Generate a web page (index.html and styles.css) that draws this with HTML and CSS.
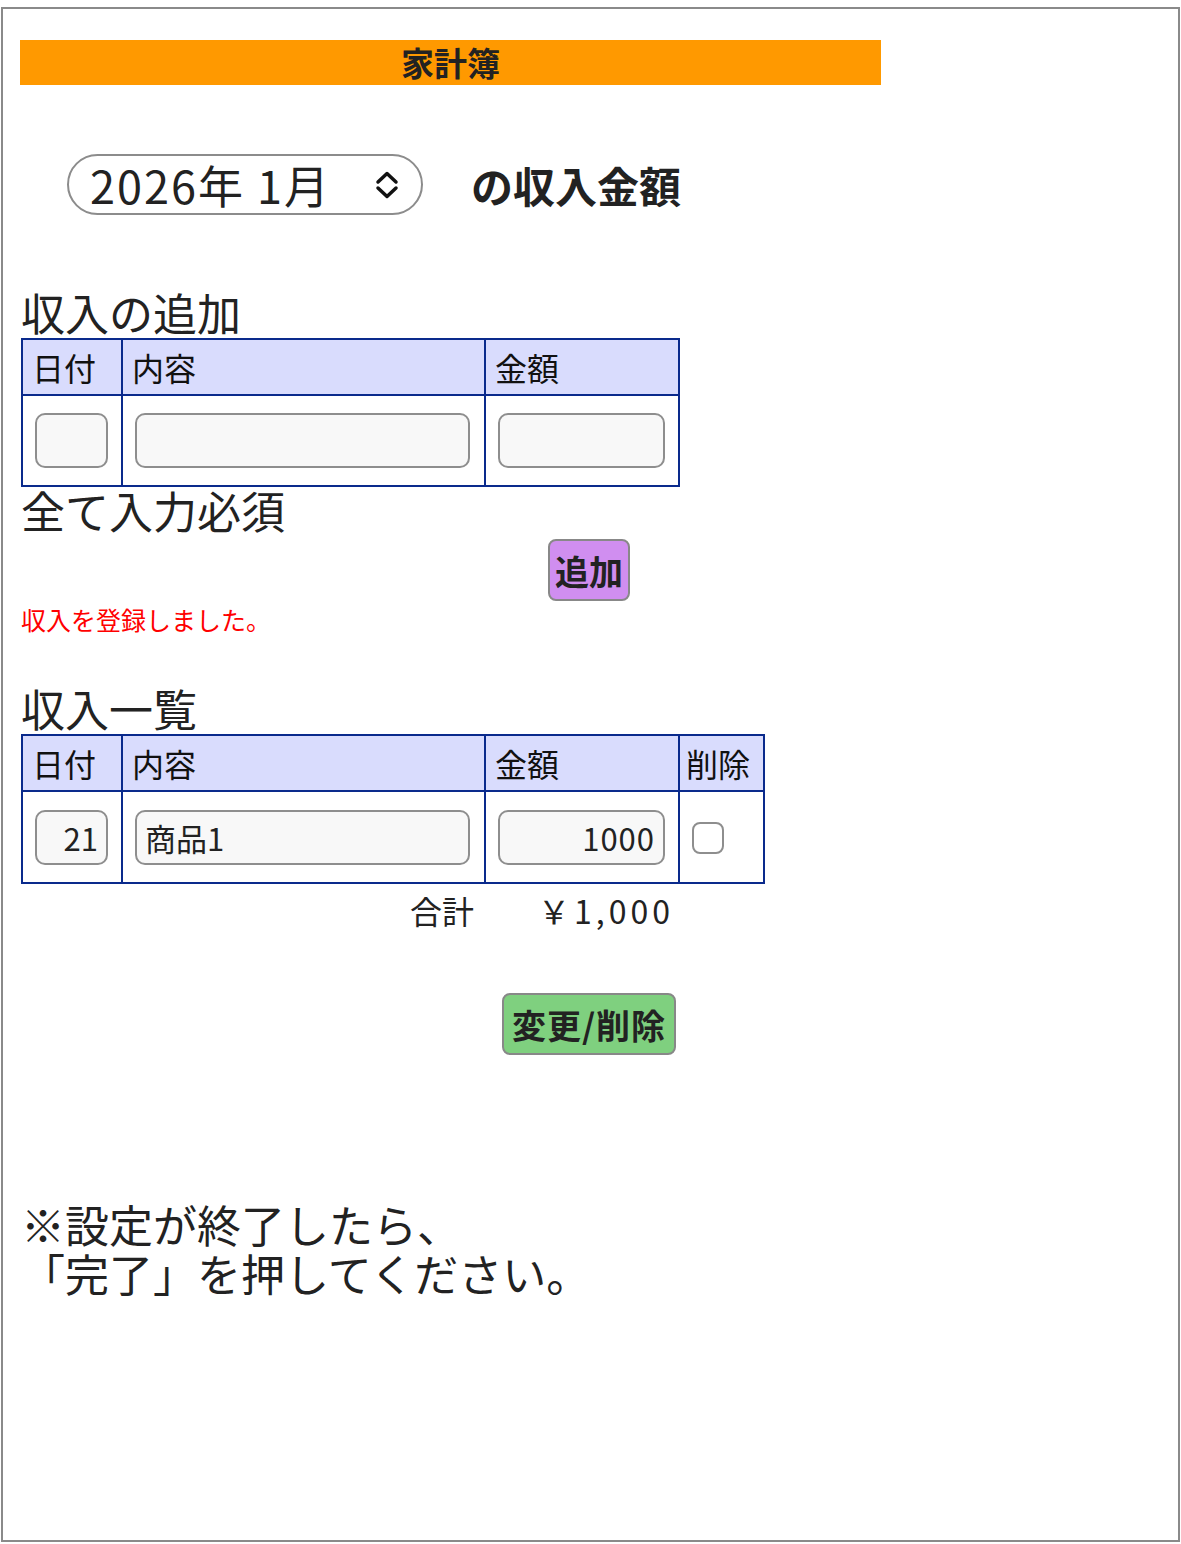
FILE: index.html
```html
<!DOCTYPE html>
<html lang="ja">
<head>
    <meta charset="UTF-8">
    <meta name="viewport" content="width=device-width, initial-scale=1.0">
    <title>家計簿 - 収入</title>
    <link rel="stylesheet" href="styles.css">
</head>
<body>
    <div class="page">
        <h1 class="title-bar">家計簿</h1>

        <div class="month-row">
            <label class="month-picker">
                <select name="month">
                    <option>2026年 1月</option>
                </select>
                <svg class="chevron" width="28" height="30" viewBox="0 0 28 30" aria-hidden="true">
                    <polyline points="5,12 14,3.5 23,12" />
                    <polyline points="5,18 14,26.5 23,18" />
                </svg>
            </label>
            <span class="month-label">の収入金額</span>
        </div>

        <!-- 収入の追加 -->
        <h2 class="section-title">収入の追加</h2>
        <form method="POST" id="incomeAddForm">
            <table class="income-table">
                <thead>
                    <tr>
                        <th class="col-date">日付</th>
                        <th class="col-item">内容</th>
                        <th class="col-amount">金額</th>
                    </tr>
                </thead>
                <tbody>
                    <tr>
                        <td><input type="text" class="input-date" name="day"></td>
                        <td><input type="text" class="input-item" name="item"></td>
                        <td><input type="text" class="input-amount" name="amount"></td>
                    </tr>
                </tbody>
            </table>
            <p class="required-note">全て入力必須</p>
            <div class="actions">
                <button type="submit" class="btn btn-add">追加</button>
            </div>
        </form>
        <p class="flash-message">収入を登録しました。</p>

        <!-- 収入一覧 -->
        <h2 class="section-title list-title">収入一覧</h2>
        <form method="POST" id="incomeListForm">
            <table class="income-table list-table">
                <thead>
                    <tr>
                        <th class="col-date">日付</th>
                        <th class="col-item">内容</th>
                        <th class="col-amount">金額</th>
                        <th class="col-delete">削除</th>
                    </tr>
                </thead>
                <tbody>
                    <tr>
                        <td><input type="text" class="input-date" name="day_1" value="21"></td>
                        <td><input type="text" class="input-item" name="item_1" value="商品1"></td>
                        <td><input type="text" class="input-amount" name="amount_1" value="1000"></td>
                        <td><input type="checkbox" class="check-delete" name="delete_1"></td>
                    </tr>
                </tbody>
            </table>
            <div class="total-row">
                <span class="total-label">合計</span>
                <span class="total-value">￥1,000</span>
            </div>
            <div class="actions">
                <button type="submit" class="btn btn-update">変更/削除</button>
            </div>
        </form>

        <p class="footer-note">※設定が終了したら、<br>「完了」を押してください。</p>
    </div>
</body>
</html>
```

FILE: styles.css
```css
* {
    margin: 0;
    padding: 0;
    box-sizing: border-box;
    font-family: "Noto Sans CJK JP", "Noto Sans", sans-serif;
}

body {
    background-color: #ffffff;
    color: #222222;
}

.page {
    margin: 7px 1px 0 1px;
    height: 1535px;
    border: 2px solid #8a8a8a;
    padding: 31px 20px 0 17px;
}

.title-bar {
    width: 861px;
    height: 45px;
    background-color: #ff9900;
    color: #222222;
    font-size: 33px;
    font-weight: 700;
    line-height: 45px;
    text-align: center;
}

/* 年月の選択 */
.month-row {
    display: flex;
    align-items: center;
    margin-top: 69px;
    padding-left: 47px;
}

.month-picker {
    display: flex;
    align-items: center;
    width: 356px;
    height: 61px;
    border: 2px solid #8c8c8c;
    border-radius: 31px;
    padding: 0 20px 0 21px;
}

.month-picker select {
    appearance: none;
    -webkit-appearance: none;
    border: none;
    background: transparent;
    width: 283px;
    padding: 0;
    font-size: 45px;
    letter-spacing: 2px;
    color: #222222;
    outline: none;
}

.chevron polyline {
    fill: none;
    stroke: #111111;
    stroke-width: 3.5;
    stroke-linecap: round;
    stroke-linejoin: round;
}

.month-label {
    margin-left: 48px;
    font-size: 42px;
    font-weight: 700;
}

.section-title {
    margin-top: 75px;
    margin-bottom: 4px;
    padding-left: 1px;
    font-size: 44px;
    font-weight: 400;
    line-height: 44px;
}

.list-title {
    margin-top: 54px;
}

/* 入力テーブル */
.income-table {
    margin-left: 1px;
    border-collapse: separate;
    border-spacing: 0;
    table-layout: fixed;
    border-top: 2px solid #0a2a8c;
    border-left: 2px solid #0a2a8c;
}

.income-table th,
.income-table td {
    border-right: 2px solid #0a2a8c;
    border-bottom: 2px solid #0a2a8c;
}

.income-table th {
    height: 56px;
    padding: 0 9px;
    background-color: #d9dcfd;
    font-size: 32px;
    font-weight: 400;
    text-align: left;
    color: #111111;
}

.income-table td {
    height: 91px;
    padding: 0 12px;
    vertical-align: middle;
}

.list-table td {
    height: 92px;
}

.col-date { width: 100px; }
.col-item { width: 363px; }
.col-amount { width: 194px; }
.col-delete { width: 85px; padding: 0 6px !important; }

.income-table input[type="text"] {
    display: block;
    height: 55px;
    border: 2px solid #8e8e8e;
    border-radius: 10px;
    background-color: #f8f8f8;
    font-size: 31px;
    color: #222222;
    padding: 0 8px;
}

.income-table .input-date {
    width: 73px;
    text-align: right;
}

.income-table .input-item {
    width: 335px;
    height: 64px;
}

.income-table .input-amount {
    width: 167px;
    text-align: right;
    letter-spacing: 1px;
}

.check-delete {
    appearance: none;
    -webkit-appearance: none;
    display: block;
    width: 32px;
    height: 32px;
    margin-top: 2px;
    border: 2px solid #8e8e8e;
    border-radius: 8px;
    background-color: #ffffff;
}

.required-note {
    margin-top: 1px;
    padding-left: 1px;
    font-size: 44px;
    line-height: 44px;
}

.actions {
    text-align: center;
}

.btn {
    height: 62px;
    padding: 0 5px;
    border: 2px solid #888888;
    border-radius: 8px;
    font-size: 34px;
    font-weight: 700;
    color: #222222;
    cursor: pointer;
}

.btn-add {
    margin-top: 7px;
    background-color: #d08ef0;
}

.btn-update {
    margin-top: 67px;
    padding: 0 8px;
    letter-spacing: 1px;
    background-color: #7fd07f;
}

.flash-message {
    margin-top: 6px;
    padding-left: 1px;
    color: #ff0000;
    font-size: 25px;
    line-height: 25px;
}

.total-row {
    display: flex;
    width: 660px;
    justify-content: flex-end;
    gap: 64px;
    margin-top: 10px;
    padding-right: 10px;
    font-size: 32px;
    line-height: 32px;
}

.total-value {
    letter-spacing: 4px;
    margin-right: -4px;
}

.footer-note {
    margin-top: 145px;
    padding-left: 1px;
    font-size: 44px;
    line-height: 49px;
}
```
